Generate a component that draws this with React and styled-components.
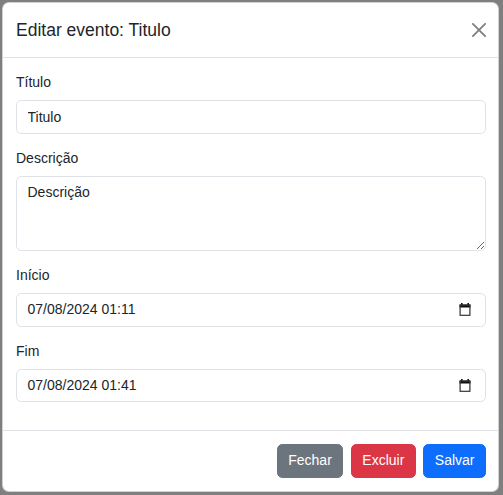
import React from 'react';
import styled, { createGlobalStyle } from 'styled-components';

const GlobalStyle = createGlobalStyle`
    html, body {
        margin: 0;
        padding: 0;
        background: #7f7f7f;
    }
    * {
        box-sizing: border-box;
    }
    body {
        font-family: "Liberation Sans", Arial, sans-serif;
        color: #212529;
    }
`;

const Backdrop = styled.div`
    width: 503px;
    height: 495px;
    padding: 2px 4px 0 2px;
    background: #7f7f7f;
`;

const Modal = styled.div`
    width: 497px;
    background: #ffffff;
    border: 1px solid rgba(0, 0, 0, 0.175);
    border-radius: 7px;
    display: flex;
    flex-direction: column;
`;

const Header = styled.div`
    display: flex;
    align-items: center;
    justify-content: space-between;
    padding: 14px 12px 14px 13px;
    border-bottom: 1px solid #dee2e6;
`;

const Title = styled.h5`
    margin: 0;
    font-size: 17.5px;
    line-height: 26px;
    font-weight: 400;
    color: #212529;
`;

const CloseButton = styled.button`
    width: 14px;
    height: 14px;
    padding: 0;
    border: 0;
    background: transparent;
    opacity: 0.5;
    display: flex;
    cursor: pointer;
`;

const Body = styled.div`
    padding: 14px 12px 14px 13px;
`;

const Field = styled.div`
    margin-bottom: 14px;
`;

const Label = styled.label`
    display: block;
    margin-bottom: 7px;
    font-size: 14px;
    line-height: 21px;
`;

const Input = styled.input`
    display: block;
    width: 100%;
    height: 33.5px;
    padding: 5.25px 10.5px;
    font-family: inherit;
    font-size: 14px;
    line-height: 21px;
    color: #212529;
    background: #ffffff;
    border: 1px solid #dee2e6;
    border-radius: 5.25px;
    outline: none;
`;

const TextArea = styled.textarea`
    display: block;
    width: 100%;
    height: 75.5px;
    padding: 5.25px 10.5px;
    font-family: inherit;
    font-size: 14px;
    line-height: 21px;
    color: #212529;
    border: 1px solid #dee2e6;
    border-radius: 5.25px;
    resize: vertical;
    outline: none;
`;

const DateBox = styled.div`
    display: flex;
    align-items: center;
    justify-content: space-between;
    height: 33.5px;
    padding: 5.25px 14px 5.25px 10.5px;
    font-size: 14px;
    line-height: 21px;
    border: 1px solid #dee2e6;
    border-radius: 5.25px;
    background: #ffffff;
`;

const Footer = styled.div`
    display: flex;
    justify-content: flex-end;
    gap: 7.5px;
    padding: 13px 12px 13px 13px;
    border-top: 1px solid #dee2e6;
`;

const Button = styled.button`
    font-family: inherit;
    font-size: 14px;
    line-height: 21px;
    padding: 5.25px 10.5px;
    color: #ffffff;
    background: ${(p) => p.$color};
    border: 1px solid ${(p) => p.$color};
    border-radius: 5.25px;
    cursor: pointer;
`;

const CalendarIcon = () => (
    <svg width="12" height="13" viewBox="0 0 12 13">
        <rect x="2" y="0" width="1.6" height="2.5" fill="#111" />
        <rect x="8.4" y="0" width="1.6" height="2.5" fill="#111" />
        <rect x="0.5" y="1.5" width="11" height="3" fill="#111" />
        <rect x="1.1" y="2.1" width="9.8" height="10.2" fill="none" stroke="#333" strokeWidth="1.2" />
    </svg>
);

const DateField = ({ label, value }) => (
    <Field>
        <Label>{label}</Label>
        <DateBox>
            <span>{value}</span>
            <CalendarIcon />
        </DateBox>
    </Field>
);

const App = () => {
    return (
        <Backdrop>
            <GlobalStyle />
            <Modal>
                <Header>
                    <Title>Editar evento: Titulo</Title>
                    <CloseButton aria-label="Fechar">
                        <svg width="14" height="14" viewBox="0 0 16 16">
                            <path
                                fill="#000"
                                d="M.293.293a1 1 0 0 1 1.414 0L8 6.586 14.293.293a1 1 0 1 1 1.414 1.414L9.414 8l6.293 6.293a1 1 0 0 1-1.414 1.414L8 9.414l-6.293 6.293a1 1 0 0 1-1.414-1.414L6.586 8 .293 1.707a1 1 0 0 1 0-1.414"
                            />
                        </svg>
                    </CloseButton>
                </Header>
                <Body>
                    <Field>
                        <Label>Título</Label>
                        <Input type="text" defaultValue="Titulo" />
                    </Field>
                    <Field>
                        <Label>Descrição</Label>
                        <TextArea rows={3} defaultValue="Descrição" />
                    </Field>
                    <DateField label="Início" value="07/08/2024 01:11" />
                    <DateField label="Fim" value="07/08/2024 01:41" />
                </Body>
                <Footer>
                    <Button $color="#6c757d">Fechar</Button>
                    <Button $color="#dc3545">Excluir</Button>
                    <Button $color="#0d6efd">Salvar</Button>
                </Footer>
            </Modal>
        </Backdrop>
    );
};

export default App;
